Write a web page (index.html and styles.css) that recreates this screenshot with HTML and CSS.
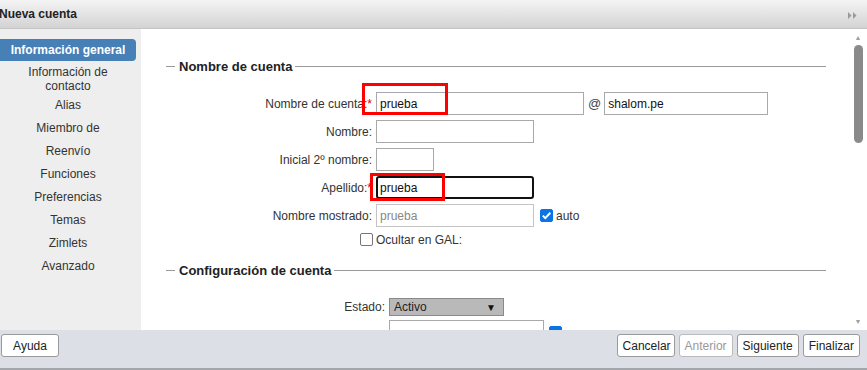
FILE: index.html
```html
<!DOCTYPE html>
<html lang="es">
<head>
    <meta charset="UTF-8">
    <meta name="viewport" content="width=device-width, initial-scale=1.0">
    <title>Nueva cuenta</title>
    <link rel="stylesheet" href="styles.css">
</head>
<body>
    <div class="dialog">
        <div class="titlebar">
            <span class="title">Nueva cuenta</span>
            <svg class="collapse" viewBox="0 0 9 7" width="9" height="7"><path d="M0 0 L3.5 3.5 L0 7 Z M5 0 L8.5 3.5 L5 7 Z" fill="#9a9a9a"/></svg>
        </div>
        <div class="main">
            <div class="sidebar">
                <div class="tab active">Información general</div>
                <div class="tab two-line">Información de<br>contacto</div>
                <div class="tab">Alias</div>
                <div class="tab">Miembro de</div>
                <div class="tab">Reenvío</div>
                <div class="tab">Funciones</div>
                <div class="tab">Preferencias</div>
                <div class="tab">Temas</div>
                <div class="tab">Zimlets</div>
                <div class="tab">Avanzado</div>
            </div>
            <div class="content">
                <div class="pane">
                    <fieldset class="group">
                        <legend>Nombre de cuenta</legend>
                        <div class="form">
                            <label>Nombre de cuenta:<span class="req">*</span></label>
                            <div class="field">
                                <input class="text w208" type="text" value="prueba">
                                <span class="at">@</span>
                                <input class="text w164" type="text" value="shalom.pe">
                            </div>
                            <label>Nombre:</label>
                            <div class="field"><input class="text w158" type="text"></div>
                            <label>Inicial 2º nombre:</label>
                            <div class="field"><input class="text w58" type="text"></div>
                            <label>Apellido:<span class="req">*</span></label>
                            <div class="field"><input class="text w158 focus" type="text" value="prueba"></div>
                            <label>Nombre mostrado:</label>
                            <div class="field">
                                <input class="text w158 muted" type="text" value="prueba">
                                <span class="check on"><svg viewBox="0 0 13 13" width="13" height="13"><path d="M2.8 6.6 L5.3 9.1 L10.3 3.8" fill="none" stroke="#fff" stroke-width="2"/></svg></span>
                                <span class="check-label">auto</span>
                            </div>
                            <div class="check-cell"><span class="check"></span></div>
                            <div class="field short"><span class="check-label">Ocultar en GAL:</span></div>
                            <div class="mark mark-account"></div>
                            <div class="mark mark-surname"></div>
                        </div>
                    </fieldset>
                    <fieldset class="group second">
                        <legend>Configuración de cuenta</legend>
                        <div class="form wide">
                            <label>Estado:</label>
                            <div class="field short">
                                <div class="select">Activo<span class="caret">&#9660;</span></div>
                            </div>
                            <label></label>
                            <div class="field">
                                <input class="text w155" type="text">
                                <span class="check on small"></span>
                            </div>
                        </div>
                    </fieldset>
                </div>
                <div class="scrollbar">
                    <span class="arrow">&#9650;</span>
                    <div class="thumb"></div>
                    <span class="arrow down">&#9660;</span>
                </div>
            </div>
        </div>
        <div class="footer">
            <button class="btn">Ayuda</button>
            <div class="actions">
                <button class="btn">Cancelar</button>
                <button class="btn disabled">Anterior</button>
                <button class="btn">Siguiente</button>
                <button class="btn">Finalizar</button>
            </div>
        </div>
    </div>
</body>
</html>
```
FILE: styles.css
```css
body {
    margin: 0;
    font-family: "Liberation Sans", Arial, sans-serif;
    font-size: 12px;
    color: #333;
    background-color: #fff;
}
.dialog {
    width: 867px;
    height: 370px;
    display: flex;
    flex-direction: column;
    overflow: hidden;
}
.titlebar {
    height: 28px;
    display: flex;
    align-items: center;
    justify-content: space-between;
    background: linear-gradient(#f4f4f4, #d3d3d3);
    border-bottom: 1px solid #c4c4c4;
}
.title {
    font-weight: bold;
    color: #222;
    margin-left: -1px;
}
.collapse {
    margin-right: 10px;
    margin-top: 2px;
}
.main {
    flex: 1;
    display: flex;
    min-height: 0;
}
.sidebar {
    width: 141px;
    background-color: #eeeeee;
    padding-top: 10px;
    box-sizing: border-box;
}
.tab {
    width: 136px;
    text-align: center;
    color: #333;
    line-height: 14px;
    padding: 4px 0 5px;
}
.tab.active {
    background-color: #4680b6;
    color: #fff;
    font-weight: bold;
    border-radius: 0 4px 4px 0;
    padding: 4px 0 4px;
    margin-bottom: 4px;
}
.tab.two-line {
    padding: 0 0 1px;
}
.content {
    flex: 1;
    display: flex;
    background-color: #fff;
    min-width: 0;
}
.pane {
    flex: 1;
    position: relative;
    overflow: hidden;
    padding-top: 30px;
}
.group {
    border: none;
    border-top: 1px solid #999;
    margin: 0 25px 0 25px;
    padding: 0;
    min-width: 0;
}
.group legend {
    font-weight: bold;
    font-size: 13px;
    color: #222;
    margin-left: 9px;
    padding: 0 3px 0 4px;
}
.group.second {
    margin-top: 15px;
}
.form {
    position: relative;
    display: grid;
    grid-template-columns: 231px auto;
    column-gap: 4px;
    row-gap: 5px;
    margin-left: -25px;
    margin-top: 18px;
    align-items: center;
}
.form.wide {
    grid-template-columns: 244px auto;
    margin-top: 21px;
    row-gap: 5px;
}
.form label {
    text-align: right;
    color: #333;
}
.req {
    color: #d00;
}
.field {
    display: flex;
    align-items: center;
    height: 23px;
}
.field.short {
    height: 16px;
}
.text {
    height: 23px;
    box-sizing: border-box;
    border: 1px solid #a9a9a9;
    font-family: inherit;
    font-size: 12px;
    color: #111;
    padding: 0 3px;
    margin: 0;
    outline: none;
}
.text.focus {
    border: 2px solid #111;
    border-radius: 3px;
    padding: 0 2px;
}
.text.muted {
    color: #888;
    border-color: #c4c4c4;
}
.w208 { width: 208px; }
.w164 { width: 164px; }
.w158 { width: 158px; }
.w155 { width: 155px; }
.w58 { width: 58px; }
.at {
    margin: 0 3px 0 4px;
    font-size: 13px;
    color: #444;
}
.check {
    width: 13px;
    height: 13px;
    box-sizing: border-box;
    border: 1px solid #767676;
    border-radius: 2px;
    background-color: #fff;
    display: inline-block;
}
.check.on {
    background-color: #0b74e5;
    border-color: #0b74e5;
    margin-left: 6px;
    margin-right: 3px;
}
.check.on svg {
    display: block;
    margin: -1px;
}
.check.small {
    margin-left: 5px;
    align-self: flex-start;
    margin-top: 6px;
}
.check-label {
    color: #333;
}
.check-cell {
    text-align: right;
    height: 16px;
}
.check-cell .check {
    margin-top: 1px;
    margin-right: -1px;
}
.select {
    width: 115px;
    height: 18px;
    box-sizing: border-box;
    background-color: #b9b9b9;
    border: 1px solid #8a8a8a;
    display: flex;
    align-items: center;
    justify-content: space-between;
    padding: 0 7px 0 4px;
    color: #222;
}
.caret {
    font-size: 10px;
    color: #111;
}
.mark {
    position: absolute;
    border: 3px solid #f00;
    box-sizing: border-box;
}
.mark-account {
    left: 221px;
    top: -9px;
    width: 86px;
    height: 32px;
}
.mark-surname {
    left: 229px;
    top: 81px;
    width: 75px;
    height: 28px;
}
.scrollbar {
    width: 16px;
    display: flex;
    flex-direction: column;
    align-items: center;
    background-color: #fff;
}
.arrow {
    font-size: 7px;
    color: #a0a0a0;
    margin-top: 5px;
    margin-right: 2px;
}
.arrow.down {
    margin-top: auto;
    margin-bottom: 5px;
}
.thumb {
    width: 9px;
    height: 98px;
    margin-top: 4px;
    margin-right: 2px;
    background-color: #8a8a8a;
    border-radius: 5px;
}
.footer {
    background-color: #dce0e6;
    border-bottom: 2px solid #a3a6aa;
    display: flex;
    align-items: flex-start;
    justify-content: space-between;
    padding: 4px 7px 0 1px;
    height: 34px;
}
.actions {
    display: flex;
    gap: 4px;
}
.btn {
    font-family: inherit;
    font-size: 12px;
    color: #222;
    background-color: #fff;
    border: 1px solid #9a9a9a;
    border-radius: 3px;
    height: 23px;
    padding: 0 5px;
}
.btn:first-child {
    width: 58px;
}
.btn.disabled {
    color: #999;
    border-color: #bbb;
}
```
